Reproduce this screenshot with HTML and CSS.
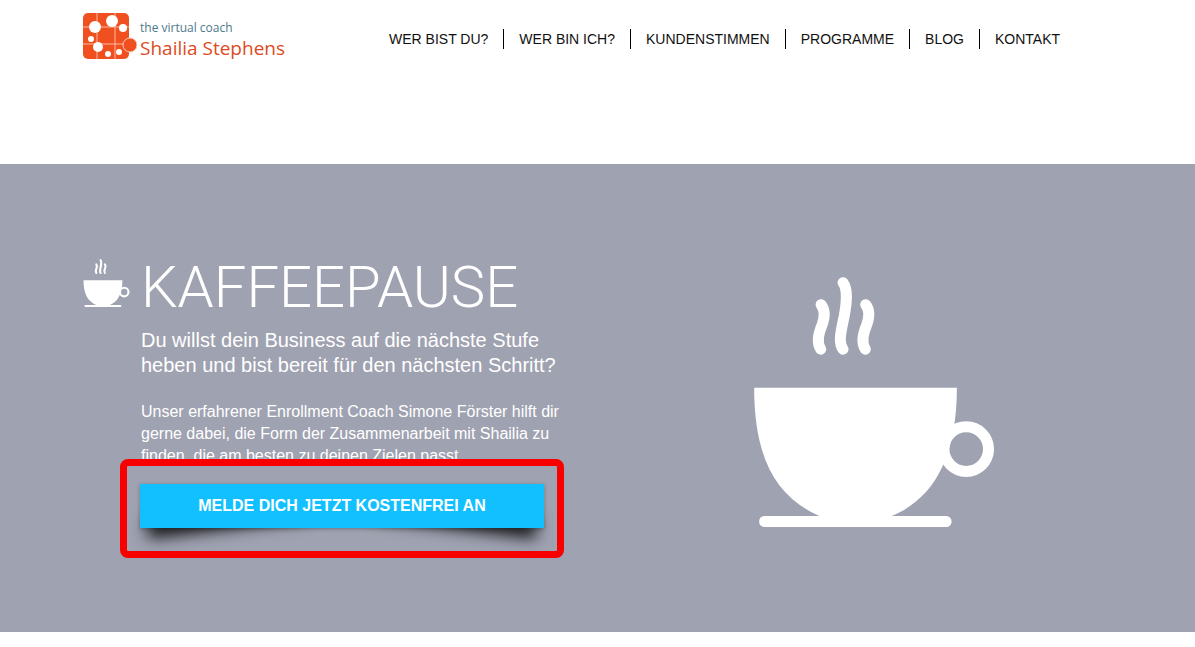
FILE: index.html
```
<!DOCTYPE html>
<html lang="de">
<head>
    <meta charset="UTF-8">
    <meta name="viewport" content="width=device-width, initial-scale=1.0">
    <title>Kaffeepause - Shailia Stephens</title>
    <link rel="stylesheet" href="styles.css">
</head>
<body>

<!-- cup shape, used for the small icon and the big picture -->
<svg class="sprite" aria-hidden="true">
    <symbol id="cup" viewBox="42 50 720 751">
        <path d="M42 383H651C651 600 575 720 455 768V775H238V768C105 710 42 590 42 383Z" fill="#fff"/>
        <circle cx="679" cy="567" r="67" fill="none" stroke="#fff" stroke-width="33"/>
        <rect x="57" y="768" width="578" height="33" rx="16" fill="#fff"/>
        <g fill="none" stroke="#fff" stroke-width="33" stroke-linecap="round">
            <path d="M243 133C256 150 254 172 246 194C235 220 228 246 242 267"/>
            <path d="M309 67C324 88 320 125 313 165C304 210 293 246 309 267"/>
            <path d="M377 133C390 150 388 172 380 194C369 220 362 246 376 267"/>
        </g>
    </symbol>
</svg>

<header class="header">
    <div class="container header-inner">
        <a class="logo" href="#">
            <svg class="logo-mark" viewBox="0 0 54 46" aria-hidden="true">
                <rect width="46" height="46" rx="5" fill="#f0501f"/>
                <path d="M14 0V46M32 0V46M0 14H46M0 31H46" stroke="#f9b9a0" stroke-width="1"/>
                <g fill="#fff">
                    <circle cx="12" cy="14" r="6"/>
                    <circle cx="29" cy="8" r="6"/>
                    <circle cx="40" cy="15" r="4"/>
                    <circle cx="8" cy="26" r="3"/>
                    <circle cx="15" cy="34" r="5"/>
                    <circle cx="25" cy="41" r="3"/>
                    <circle cx="36" cy="39" r="3"/>
                </g>
                <circle cx="47" cy="32" r="7" fill="#f0501f" stroke="#f9c9b6" stroke-width="1"/>
            </svg>
            <span class="logo-text">
                <span class="logo-tagline">the virtual coach</span>
                <span class="logo-name">Shailia Stephens</span>
            </span>
        </a>
        <nav class="nav">
            <a href="#">WER BIST DU?</a>
            <a href="#">WER BIN ICH?</a>
            <a href="#">KUNDENSTIMMEN</a>
            <a href="#">PROGRAMME</a>
            <a href="#">BLOG</a>
            <a href="#">KONTAKT</a>
        </nav>
    </div>
</header>

<main class="hero">
    <div class="container hero-inner">
        <svg class="cup-small" aria-hidden="true"><use href="#cup"/></svg>
        <div class="hero-text">
            <h1>KAFFEEPAUSE</h1>
            <p class="lead">Du willst dein Business auf die nächste Stufe<br>heben und bist bereit für den nächsten Schritt?</p>
            <p class="info">Unser erfahrener Enrollment Coach Simone Förster hilft dir<br>gerne dabei, die Form der Zusammenarbeit mit Shailia zu<br>finden, die am besten zu deinen Zielen passt.</p>
            <div class="highlight">
                <button class="signup-btn" type="button">MELDE DICH JETZT KOSTENFREI AN</button>
            </div>
        </div>
        <svg class="cup-big" aria-hidden="true"><use href="#cup"/></svg>
    </div>
</main>

</body>
</html>
```
FILE: styles.css
```
* {
    box-sizing: border-box;
}

body {
    margin: 0;
    background: #fff;
    font-family: "Liberation Sans", Arial, sans-serif;
}

.sprite {
    display: none;
}

.container {
    max-width: 1029px;
    margin: 0 auto;
}

.header {
    min-height: 164px;
    padding-top: 13px;
}

.header-inner {
    display: flex;
    align-items: flex-start;
}

.logo {
    display: flex;
    gap: 3px;
    text-decoration: none;
    white-space: nowrap;
}

.logo-mark {
    width: 54px;
    height: 46px;
}

.logo-text {
    display: flex;
    flex-direction: column;
    padding-top: 6px;
    font-family: "Open Sans", "Noto Sans", sans-serif;
}

.logo-tagline {
    color: #4c7a8a;
    font-size: 12px;
    line-height: 18px;
}

.logo-name {
    color: #dd4a22;
    font-size: 19px;
    line-height: 22px;
}

.nav {
    display: flex;
    margin-left: 89px;
    padding-top: 16px;
}

.nav a {
    padding: 0 15px;
    color: #111;
    font-size: 14px;
    line-height: 20px;
    text-decoration: none;
    white-space: nowrap;
}

.nav a + a {
    border-left: 1px solid #000;
}

.hero {
    min-height: 468px;
    padding: 95px 0 74px;
    background: #9fa2b1;
    color: #fff;
}

.hero-inner {
    display: flex;
    align-items: flex-start;
}

.cup-small {
    flex: none;
    width: 47px;
    height: 48px;
    margin-right: 11px;
}

.hero-text {
    flex: none;
}

h1 {
    margin: 0;
    font-family: Roboto, sans-serif;
    font-size: 58px;
    font-weight: 300;
    line-height: 56px;
}

.lead {
    margin: 13px 0 0;
    font-size: 20px;
    line-height: 25px;
}

.info {
    margin: 23px 0 0;
    font-size: 16px;
    line-height: 22px;
}

/* red frame around the button */
.highlight {
    position: relative;
    z-index: 0;
    width: 444px;
    margin: -8px 0 0 -21px;
    padding: 18px 13px 23px;
    border: 7px solid #f80000;
    border-radius: 8px;
}

.signup-btn {
    position: relative;
    display: block;
    width: 100%;
    padding: 0;
    border: none;
    background: #12bfff;
    color: #fff;
    font-family: inherit;
    font-size: 16px;
    font-weight: bold;
    line-height: 44px;
    cursor: pointer;
    box-shadow: 0 1px 4px rgba(0, 0, 0, 0.3);
}

/* curled shadow below both corners */
.highlight::before,
.highlight::after {
    content: "";
    position: absolute;
    z-index: -1;
    bottom: 41px;
    width: 160px;
    height: 16px;
    box-shadow: 0 18px 16px #000;
}

.highlight::before {
    left: 18px;
    transform: rotate(-7deg);
}

.highlight::after {
    right: 18px;
    transform: rotate(7deg);
}

.cup-big {
    flex: none;
    width: 240px;
    height: 250px;
    margin: 18px 118px 0 auto;
}
```
